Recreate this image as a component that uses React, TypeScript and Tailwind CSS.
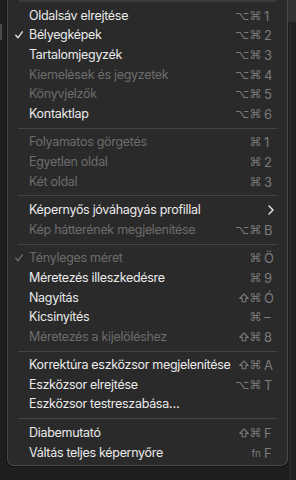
import React from 'react';

type Item = {
  label: string;
  mods?: string;
  keyChar?: string;
  disabled?: boolean;
  checked?: boolean;
  submenu?: boolean;
};

type Entry = Item | 'sep';

const entries: Entry[] = [
  { label: 'Oldalsáv elrejtése', mods: '⌥⌘', keyChar: '1' },
  { label: 'Bélyegképek', mods: '⌥⌘', keyChar: '2', checked: true },
  { label: 'Tartalomjegyzék', mods: '⌥⌘', keyChar: '3' },
  { label: 'Kiemelések és jegyzetek', mods: '⌥⌘', keyChar: '4', disabled: true },
  { label: 'Könyvjelzők', mods: '⌥⌘', keyChar: '5', disabled: true },
  { label: 'Kontaktlap', mods: '⌥⌘', keyChar: '6' },
  'sep',
  { label: 'Folyamatos görgetés', mods: '⌘', keyChar: '1', disabled: true },
  { label: 'Egyetlen oldal', mods: '⌘', keyChar: '2', disabled: true },
  { label: 'Két oldal', mods: '⌘', keyChar: '3', disabled: true },
  'sep',
  { label: 'Képernyős jóváhagyás profillal', submenu: true },
  { label: 'Kép hátterének megjelenítése', mods: '⌥⌘', keyChar: 'B', disabled: true },
  'sep',
  { label: 'Tényleges méret', mods: '⌘', keyChar: 'Ö', disabled: true, checked: true },
  { label: 'Méretezés illeszkedésre', mods: '⌘', keyChar: '9' },
  { label: 'Nagyítás', mods: '⇧⌘', keyChar: 'Ó' },
  { label: 'Kicsinyítés', mods: '⌘', keyChar: '–' },
  { label: 'Méretezés a kijelöléshez', mods: '⇧⌘', keyChar: '8', disabled: true },
  'sep',
  { label: 'Korrektúra eszközsor megjelenítése', mods: '⇧⌘', keyChar: 'A' },
  { label: 'Eszközsor elrejtése', mods: '⌥⌘', keyChar: 'T' },
  { label: 'Eszközsor testreszabása…' },
  'sep',
  { label: 'Diabemutató', mods: '⇧⌘', keyChar: 'F' },
  { label: 'Váltás teljes képernyőre', mods: 'fn', keyChar: 'F' },
];

function Check({ dim }: { dim?: boolean }) {
  return (
    <svg width="8" height="8" viewBox="0 0 8 8" className={dim ? 'text-[#6e6e6e]' : 'text-[#e8e8e8]'}>
      <path d="M0.8 4.3 L3 6.8 L7.3 0.8" fill="none" stroke="currentColor" strokeWidth="1.3" strokeLinecap="round" strokeLinejoin="round" />
    </svg>
  );
}

function Chevron() {
  return (
    <svg width="6" height="10" viewBox="0 0 6 10" className="text-[#e8e8e8]">
      <path d="M1 1 L5 5 L1 9" fill="none" stroke="currentColor" strokeWidth="1.4" strokeLinecap="round" strokeLinejoin="round" />
    </svg>
  );
}

function ShiftIcon() {
  return (
    <svg width="10" height="10" viewBox="0 0 10 10" className="mr-[1px]">
      <path d="M5 1 L9.3 5.4 H6.8 V8.8 H3.2 V5.4 H0.7 Z" fill="none" stroke="currentColor" strokeWidth="1.1" strokeLinejoin="round" />
    </svg>
  );
}

function Mods({ mods }: { mods: string }) {
  if (mods === 'fn') {
    return <span className="pr-[3px] text-[10px] leading-[16px]">fn</span>;
  }
  const parts = mods.split('');
  return (
    <span className="flex items-center pr-[2px]">
      {parts.map((m, i) =>
        m === '⇧' ? (
          <ShiftIcon key={i} />
        ) : (
          <span key={i} className="font-['DejaVu_Sans'] text-[12px] leading-[16px] tracking-[0.5px]">
            {m}
          </span>
        ),
      )}
    </span>
  );
}

function Row({ item }: { item: Item }) {
  return (
    <div className="flex h-[19.6px] items-center pr-[12px]">
      <div className="flex w-[21px] shrink-0 items-center justify-end pr-[6px]">
        {item.checked && <Check dim={item.disabled} />}
      </div>
      <div
        className={`min-w-0 flex-1 whitespace-nowrap text-[12.5px] leading-[16px] tracking-[-0.3px] ${
          item.disabled ? 'text-[#6c6c6c]' : 'text-[#ebebeb]'
        }`}
      >
        {item.label}
      </div>
      {item.submenu && (
        <div className="flex w-[11px] justify-end pr-[1px]">
          <Chevron />
        </div>
      )}
      {item.keyChar && item.mods && (
        <div className="flex shrink-0 items-center text-[#7b7b7b]">
          <Mods mods={item.mods} />
          <span className="w-[11px] text-left text-[13px] leading-[16px]">{item.keyChar}</span>
        </div>
      )}
    </div>
  );
}

export default function App() {
  return (
    <div className="flex h-[480px] w-[296px] overflow-hidden bg-[#1e1e1e] font-['Inter','Liberation_Sans',sans-serif]">
      <div className="flex w-[7px] shrink-0 flex-col bg-[#1f1f1f]">
        <div className="h-[24px]" />
        <div className="h-[16px] w-[2px] bg-[#4a4a4a]" />
      </div>
      <div className="flex h-[466px] w-[281px] shrink-0 flex-col rounded-b-[7px] border border-t-0 border-[#4a4a4a] bg-[#2a2a2a] shadow-[0_0_0_1px_#111]">
        <div className="mx-[11px] h-[2px] bg-[#3c3c3c]" />
        <div className="h-[4px]" />
        {entries.map((e, i) =>
          e === 'sep' ? (
            <div key={i} className="flex h-[9px] items-center px-[10px]">
              <div className="h-px w-full bg-[#444444]" />
            </div>
          ) : (
            <Row key={i} item={e} />
          ),
        )}
      </div>
      <div className="flex flex-1 flex-col">
        <div className="h-[22px] bg-[#333333]" />
        <div className="flex flex-1 bg-[#202020]">
          <div className="ml-[2px] w-px bg-[#2f2f2f]" />
        </div>
      </div>
    </div>
  );
}
